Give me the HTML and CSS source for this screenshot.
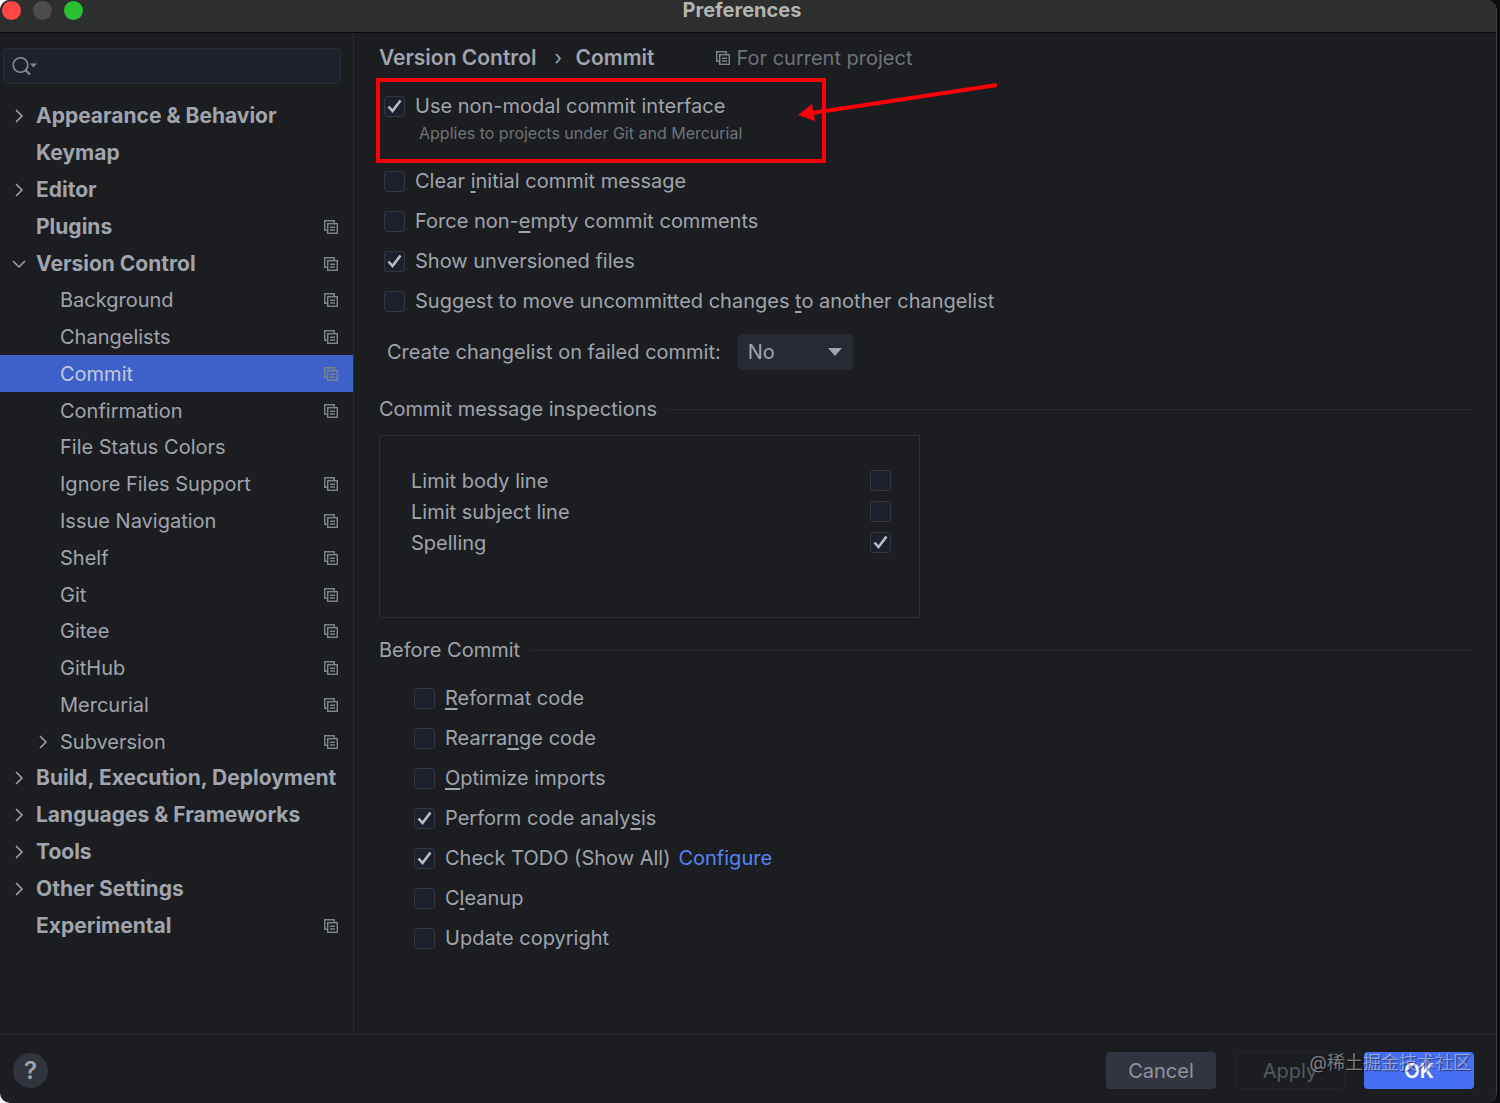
FILE: index.html
```html
<!DOCTYPE html>
<html lang="en">
<head>
    <meta charset="UTF-8">
    <meta name="viewport" content="width=device-width, initial-scale=1.0">
    <title>Preferences</title>
    <link rel="stylesheet" href="styles.css">
</head>
<body>
    <svg class="symbols" width="0" height="0" aria-hidden="true">
        <symbol id="project" viewBox="0 0 14 14">
            <path d="M3.5 10.2H0.7V0.7H10.2V3" />
            <rect x="3.7" y="3.7" width="9.6" height="9.6" />
            <path d="M6 7.2H11M6 10H11" />
        </symbol>
        <symbol id="arrow" viewBox="0 0 14 14">
            <path d="M4 1L10 7L4 13" />
        </symbol>
    </svg>

    <div class="window">
        <header class="titlebar">
            <div class="lights">
                <button class="light close" aria-label="Close"></button>
                <button class="light minimize" aria-label="Minimize"></button>
                <button class="light zoom" aria-label="Zoom"></button>
            </div>
            <h1>Preferences</h1>
        </header>

        <div class="content">
            <aside class="sidebar">
                <div class="search">
                    <svg class="search-icon" viewBox="0 0 26 20" aria-hidden="true">
                        <circle cx="8.5" cy="9" r="7.3" />
                        <path d="M13.5 14L18 18.5" stroke-width="2.2" />
                        <path class="solid" d="M18 7.5H25L21.5 11.5Z" />
                    </svg>
                    <input type="text" class="search-input" aria-label="Search settings">
                </div>
                <nav class="tree">
                    <a href="#" class="item top"><svg class="arrow"><use href="#arrow" /></svg><span>Appearance &amp; Behavior</span></a>
                    <a href="#" class="item top"><span>Keymap</span></a>
                    <a href="#" class="item top"><svg class="arrow"><use href="#arrow" /></svg><span>Editor</span></a>
                    <a href="#" class="item top"><span>Plugins</span><svg class="project"><use href="#project" /></svg></a>
                    <a href="#" class="item top"><svg class="arrow open"><use href="#arrow" /></svg><span>Version Control</span><svg class="project"><use href="#project" /></svg></a>
                    <a href="#" class="item sub"><span>Background</span><svg class="project"><use href="#project" /></svg></a>
                    <a href="#" class="item sub"><span>Changelists</span><svg class="project"><use href="#project" /></svg></a>
                    <a href="#" class="item sub selected"><span>Commit</span><svg class="project"><use href="#project" /></svg></a>
                    <a href="#" class="item sub"><span>Confirmation</span><svg class="project"><use href="#project" /></svg></a>
                    <a href="#" class="item sub"><span>File Status Colors</span></a>
                    <a href="#" class="item sub"><span>Ignore Files Support</span><svg class="project"><use href="#project" /></svg></a>
                    <a href="#" class="item sub"><span>Issue Navigation</span><svg class="project"><use href="#project" /></svg></a>
                    <a href="#" class="item sub"><span>Shelf</span><svg class="project"><use href="#project" /></svg></a>
                    <a href="#" class="item sub"><span>Git</span><svg class="project"><use href="#project" /></svg></a>
                    <a href="#" class="item sub"><span>Gitee</span><svg class="project"><use href="#project" /></svg></a>
                    <a href="#" class="item sub"><span>GitHub</span><svg class="project"><use href="#project" /></svg></a>
                    <a href="#" class="item sub"><span>Mercurial</span><svg class="project"><use href="#project" /></svg></a>
                    <a href="#" class="item sub"><svg class="arrow"><use href="#arrow" /></svg><span>Subversion</span><svg class="project"><use href="#project" /></svg></a>
                    <a href="#" class="item top"><svg class="arrow"><use href="#arrow" /></svg><span>Build, Execution, Deployment</span></a>
                    <a href="#" class="item top"><svg class="arrow"><use href="#arrow" /></svg><span>Languages &amp; Frameworks</span></a>
                    <a href="#" class="item top"><svg class="arrow"><use href="#arrow" /></svg><span>Tools</span></a>
                    <a href="#" class="item top"><svg class="arrow"><use href="#arrow" /></svg><span>Other Settings</span></a>
                    <a href="#" class="item top"><span>Experimental</span><svg class="project"><use href="#project" /></svg></a>
                </nav>
            </aside>

            <main class="settings">
                <div class="breadcrumb">
                    <span class="crumb">Version Control</span>
                    <span class="separator">›</span>
                    <span class="crumb">Commit</span>
                    <span class="scope"><svg class="project"><use href="#project" /></svg>For current project</span>
                </div>

                <div class="options">
                    <div class="marked">
                        <label class="option"><input type="checkbox" checked><span>Use non-modal commit interface</span></label>
                        <p class="help">Applies to projects under Git and Mercurial</p>
                        <div class="mark-box"></div>
                        <svg class="mark-arrow" viewBox="0 0 202 42" aria-hidden="true">
                            <path class="shaft" d="M199 3L14 31" />
                            <path class="head" d="M0 33L14 22L17 39Z" />
                        </svg>
                    </div>
                    <label class="option"><input type="checkbox"><span>Clear <u>i</u>nitial commit message</span></label>
                    <label class="option"><input type="checkbox"><span>Force non-<u>e</u>mpty commit comments</span></label>
                    <label class="option"><input type="checkbox" checked><span>Show unversioned files</span></label>
                    <label class="option"><input type="checkbox"><span>Suggest to move uncommitted changes <u>t</u>o another changelist</span></label>
                </div>

                <div class="field">
                    <label for="failedCommit">Create changelist on failed commit:</label>
                    <select id="failedCommit">
                        <option>No</option>
                        <option>Yes</option>
                        <option>Ask</option>
                    </select>
                </div>

                <h2 class="group">Commit message inspections</h2>
                <div class="inspections">
                    <table>
                        <tr>
                            <td><label for="bodyLine">Limit body line</label></td>
                            <td class="check"><input type="checkbox" id="bodyLine"></td>
                        </tr>
                        <tr>
                            <td><label for="subjectLine">Limit subject line</label></td>
                            <td class="check"><input type="checkbox" id="subjectLine"></td>
                        </tr>
                        <tr>
                            <td><label for="spelling">Spelling</label></td>
                            <td class="check"><input type="checkbox" id="spelling" checked></td>
                        </tr>
                    </table>
                </div>

                <h2 class="group before">Before Commit</h2>
                <div class="options nested">
                    <label class="option"><input type="checkbox"><span><u>R</u>eformat code</span></label>
                    <label class="option"><input type="checkbox"><span>Rearra<u>n</u>ge code</span></label>
                    <label class="option"><input type="checkbox"><span><u>O</u>ptimize imports</span></label>
                    <label class="option"><input type="checkbox" checked><span>Perform code analy<u>s</u>is</span></label>
                    <div class="option-line">
                        <label class="option"><input type="checkbox" checked><span>Check TODO (Show All)</span></label>
                        <a href="#" class="link">Configure</a>
                    </div>
                    <label class="option"><input type="checkbox"><span>C<u>l</u>eanup</span></label>
                    <label class="option"><input type="checkbox"><span>Update copyright</span></label>
                </div>
            </main>
        </div>

        <footer class="footer">
            <button class="help-button" aria-label="Help">?</button>
            <div class="buttons">
                <button class="button">Cancel</button>
                <button class="button apply" disabled>Apply</button>
                <button class="button ok">OK</button>
            </div>
            <div class="watermark">@稀土掘金技术社区</div>
        </footer>
    </div>
</body>
</html>
```
FILE: styles.css
```css
* {
    box-sizing: border-box;
}

body {
    margin: 0;
    padding-right: 3px;
    background: linear-gradient(to right, #ffffff 50%, #0b0c0e 50%);
    font-family: Inter, "Liberation Sans", sans-serif;
    font-size: 20px;
    line-height: 28px;
    color: #a0a4ad;
}

a {
    color: inherit;
    text-decoration: none;
}

button {
    font-family: inherit;
    padding: 0;
    border: none;
}

u {
    text-decoration-thickness: 2px;
    text-underline-offset: 3px;
}

.symbols {
    position: absolute;
}

.symbols path,
.symbols rect {
    fill: none;
    stroke: currentColor;
    stroke-width: 1.5;
}

.window {
    display: flex;
    flex-direction: column;
    min-height: 100vh;
    background: #1b1d21;
    border-right: 1px solid #3c3f43;
    border-radius: 10px;
    overflow: hidden;
}

/* Title bar */
.titlebar {
    display: grid;
    grid-template-columns: 1fr auto 1fr;
    height: 33px;
    padding: 0 14px 0 2px;
    background: #2d2e2e;
    border-bottom: 1px solid #0a0a0b;
}

.titlebar h1 {
    margin: 0;
    font-size: 20px;
    font-weight: 700;
    line-height: 20px;
    color: #b4b4b4;
}

.lights {
    display: flex;
    gap: 12px;
    padding-top: 1px;
}

.light {
    width: 19px;
    height: 19px;
    border-radius: 50%;
}

.close {
    background: #ff4746;
}

.minimize {
    background: #4b4c4c;
}

.zoom {
    background: #28c131;
}

.content {
    display: flex;
    flex: 1;
}

/* Sidebar */
.sidebar {
    display: flex;
    flex-direction: column;
    flex: none;
    width: 354px;
    padding: 15px 0 90px;
    border-right: 1px solid #2a2d31;
}

.search {
    display: flex;
    align-items: center;
    height: 36px;
    margin: 0 12px 14px 3px;
    padding-left: 8px;
    background: #1d212b;
    border: 1px solid #282c33;
    border-radius: 3px;
}

.search-icon {
    width: 26px;
    height: 20px;
    fill: none;
    stroke: #858a90;
    stroke-width: 1.6;
}

.search-icon .solid {
    fill: #858a90;
    stroke: none;
}

.search-input {
    flex: 1;
    min-width: 0;
    background: none;
    border: none;
    outline: none;
    color: inherit;
    font: inherit;
}

.tree {
    display: grid;
    flex: 1;
    grid-auto-rows: 1fr;
}

.item {
    display: flex;
    align-items: center;
    justify-content: space-between;
    padding: 0 15px 0 36px;
    white-space: nowrap;
}

.top {
    font-size: 21px;
    font-weight: 700;
}

.sub {
    padding-left: 60px;
}

.selected {
    background: #3d60c9;
    color: #c2c9dc;
}

.arrow {
    flex: none;
    width: 14px;
    height: 14px;
    margin-left: -24px;
    margin-right: 10px;
    color: #a0a4ad;
}

.arrow + span {
    margin-right: auto;
}

.open {
    transform: rotate(90deg);
}

.project {
    flex: none;
    width: 14px;
    height: 14px;
    color: #7c8389;
}

/* Settings page */
.settings {
    flex: 1;
    padding: 11px 24px 40px 25px;
}

.breadcrumb {
    display: flex;
    align-items: center;
}

.crumb {
    font-size: 21px;
    font-weight: 600;
}

.separator {
    width: 39px;
    padding-left: 4px;
    text-align: center;
}

.scope {
    display: flex;
    align-items: center;
    gap: 6px;
    margin-left: 62px;
    color: #6f7379;
}

.options {
    display: flex;
    flex-direction: column;
    align-items: flex-start;
    gap: 10px;
    margin-top: 19px;
    padding-left: 5px;
}

.option {
    display: flex;
    align-items: center;
    gap: 10px;
    height: 30px;
}

.option-line {
    display: flex;
    align-items: center;
    gap: 8px;
}

input[type="checkbox"] {
    appearance: none;
    flex: none;
    width: 21px;
    height: 21px;
    margin: 0;
    background: #1d202a;
    border: 1px solid #34373f;
    border-radius: 3px;
}

input[type="checkbox"]:checked {
    background: #1d202a url("data:image/svg+xml,%3Csvg xmlns='http://www.w3.org/2000/svg' viewBox='0 0 19 19'%3E%3Cpath d='M3.5 9.5L7.5 14L15.5 3.5' fill='none' stroke='%23b9bdc5' stroke-width='2.6'/%3E%3C/svg%3E");
}

.help {
    margin: 0;
    padding: 0 0 11px 35px;
    font-size: 16px;
    line-height: 24px;
    color: #6f7379;
}

/* Red callout around the first option */
.marked {
    position: relative;
}

.mark-box {
    position: absolute;
    top: -13px;
    left: -8px;
    width: 450px;
    height: 85px;
    border: 4px solid #fb0007;
    pointer-events: none;
}

.mark-arrow {
    position: absolute;
    top: -9px;
    left: 414px;
    width: 202px;
    height: 42px;
    pointer-events: none;
}

.shaft {
    fill: none;
    stroke: #fb0007;
    stroke-width: 4;
}

.head {
    fill: #fb0007;
}

.field {
    display: flex;
    align-items: center;
    gap: 17px;
    margin-top: 18px;
    padding-left: 8px;
}

select {
    appearance: none;
    width: 115px;
    height: 36px;
    padding: 0 10px;
    font: inherit;
    color: inherit;
    background: #272a33 url("data:image/svg+xml,%3Csvg xmlns='http://www.w3.org/2000/svg' viewBox='0 0 14 8'%3E%3Cpath d='M0 0H14L7 8Z' fill='%23a0a4ad'/%3E%3C/svg%3E") no-repeat right 11px center / 14px 8px;
    border: none;
    border-radius: 3px;
}

.group {
    display: flex;
    align-items: center;
    gap: 10px;
    margin: 25px 0 12px;
    font-size: 20px;
    font-weight: 400;
}

.group::after {
    content: '';
    flex: 1;
    height: 1px;
    background: #292c30;
}

.before {
    margin: 18px 0 0;
}

.inspections {
    max-width: 541px;
    min-height: 183px;
    padding: 29px 28px 29px 31px;
    border: 1px solid #2b2e32;
}

.inspections table {
    width: 100%;
    border-collapse: collapse;
}

.inspections tr {
    height: 31px;
}

.inspections td {
    padding: 0;
}

.inspections .check {
    width: 21px;
}

.inspections input {
    display: block;
}

.nested {
    padding-left: 35px;
}

.link {
    color: #5683f0;
}

/* Footer */
.footer {
    position: relative;
    display: flex;
    align-items: center;
    justify-content: space-between;
    height: 69px;
    padding: 3px 22px 0 13px;
    border-top: 1px solid #2a2d31;
}

.help-button {
    width: 35px;
    height: 35px;
    font-size: 24px;
    font-weight: 600;
    color: #a0a4ad;
    background: #31343d;
    border-radius: 50%;
}

.buttons {
    display: flex;
    gap: 19px;
}

.button {
    width: 110px;
    height: 37px;
    font-size: 20px;
    color: #8f939c;
    background: #323540;
    border-radius: 4px;
}

.apply {
    color: #56595e;
    background: none;
    border: 1px solid #212428;
}

.ok {
    font-weight: 600;
    color: #ffffff;
    background: #466ff5;
}

.watermark {
    position: absolute;
    right: 25px;
    bottom: 26px;
    font-family: Inter, "Noto Sans CJK SC", sans-serif;
    font-size: 18px;
    color: rgba(255, 255, 255, 0.45);
    text-shadow: 1px 1px 1px rgba(0, 0, 0, 0.5);
    pointer-events: none;
}
```
